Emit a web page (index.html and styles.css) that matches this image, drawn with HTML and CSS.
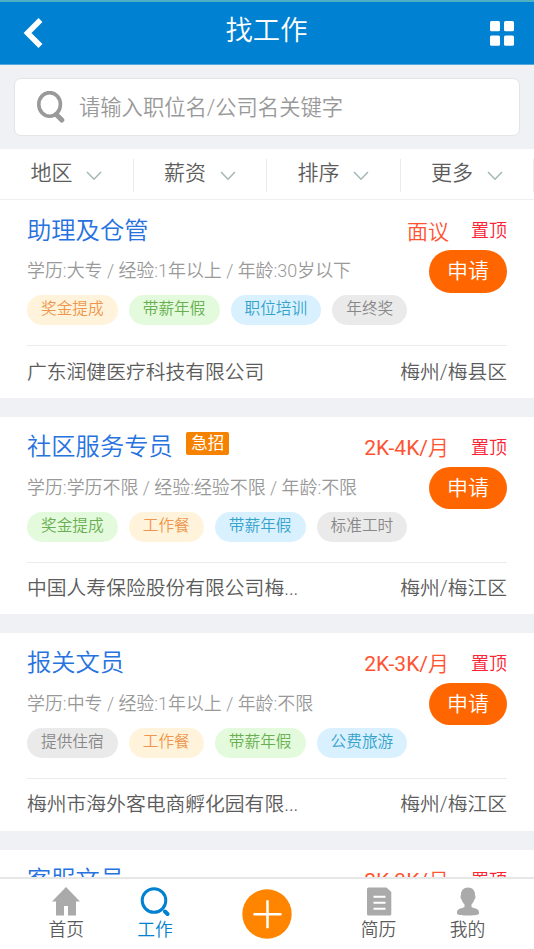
FILE: index.html
```html
<!DOCTYPE html>
<html lang="zh-CN">
<head>
<meta charset="utf-8">
<title>找工作</title>
<link rel="stylesheet" href="styles.css">
</head>
<body>
<div class="app">
  <header class="header">
    <svg class="back" viewBox="0 0 20 32"><path d="M17.500 3 4.500 16l13 13" fill="none" stroke="#fff" stroke-width="5.500"/></svg>
    <h1>找工作</h1>
    <svg class="grid-icon" viewBox="0 0 24 25" fill="#fff"><rect width="10" height="10.2" rx="1.5"/><rect x="14" width="10" height="10.2" rx="1.5"/><rect y="14.5" width="10" height="10.2" rx="1.5"/><rect x="14" y="14.5" width="10" height="10.2" rx="1.5"/></svg>
  </header>
  <div class="search">
    <div class="search-box">
      <svg viewBox="0 0 28 32" fill="none" stroke="#999"><ellipse cx="12.6" cy="13.4" rx="10.8" ry="11.8" stroke-width="3.6"/><path d="m19.300 23.500 5.500 5.500" stroke-width="5" stroke-linecap="round"/></svg>
      <span>请输入职位名/公司名关键字</span>
    </div>
  </div>
  <nav class="filters">
    <div class="filter">地区<svg viewBox="0 0 16 10"><path d="m1 1 7 7.2L15 1"/></svg></div>
    <div class="filter">薪资<svg viewBox="0 0 16 10"><path d="m1 1 7 7.2L15 1"/></svg></div>
    <div class="filter">排序<svg viewBox="0 0 16 10"><path d="m1 1 7 7.2L15 1"/></svg></div>
    <div class="filter">更多<svg viewBox="0 0 16 10"><path d="m1 1 7 7.2L15 1"/></svg></div>
  </nav>
  <main class="jobs">
    <article class="job first">
      <div class="job-main">
        <div class="info">
          <h2>助理及仓管</h2>
          <p>学历:大专 / 经验:1年以上 / 年龄:30岁以下</p>
          <div class="tags"><span class="tag yellow">奖金提成</span><span class="tag green">带薪年假</span><span class="tag blue">职位培训</span><span class="tag gray">年终奖</span></div>
        </div>
        <div class="side">
          <div class="pay"><span>面议</span><em>置顶</em></div>
          <button>申请</button>
        </div>
      </div>
      <div class="company"><span>广东润健医疗科技有限公司</span><span>梅州/梅县区</span></div>
    </article>
    <article class="job">
      <div class="job-main">
        <div class="info">
          <h2>社区服务专员<b>急招</b></h2>
          <p>学历:学历不限 / 经验:经验不限 / 年龄:不限</p>
          <div class="tags"><span class="tag green">奖金提成</span><span class="tag yellow">工作餐</span><span class="tag blue">带薪年假</span><span class="tag gray">标准工时</span></div>
        </div>
        <div class="side">
          <div class="pay"><span><strong>2K-4K/</strong>月</span><em>置顶</em></div>
          <button>申请</button>
        </div>
      </div>
      <div class="company"><span>中国人寿保险股份有限公司梅...</span><span>梅州/梅江区</span></div>
    </article>
    <article class="job">
      <div class="job-main">
        <div class="info">
          <h2>报关文员</h2>
          <p>学历:中专 / 经验:1年以上 / 年龄:不限</p>
          <div class="tags"><span class="tag gray">提供住宿</span><span class="tag yellow">工作餐</span><span class="tag green">带薪年假</span><span class="tag blue">公费旅游</span></div>
        </div>
        <div class="side">
          <div class="pay"><span><strong>2K-3K/</strong>月</span><em>置顶</em></div>
          <button>申请</button>
        </div>
      </div>
      <div class="company"><span>梅州市海外客电商孵化园有限...</span><span>梅州/梅江区</span></div>
    </article>
    <article class="job">
      <div class="job-main">
        <div class="info"><h2>客服文员</h2></div>
        <div class="side"><div class="pay"><span><strong>2K-3K/</strong>月</span><em>置顶</em></div></div>
      </div>
    </article>
  </main>
  <footer class="tabbar">
    <div class="tab">
      <svg viewBox="0 0 28 29" fill="#aaa"><path d="M14 0 28 14.5h-4V28.5h-8V19h-4v9.500H4V14.500H0z"/></svg>
      <span>首页</span>
    </div>
    <div class="tab active">
      <svg class="find" viewBox="0 0 30 30" fill="none" stroke="#0081d1"><circle cx="14" cy="13.500" r="11.800" stroke-width="3"/><path d="m25 24.500 2.500 2.500" stroke-width="4" stroke-linecap="round"/></svg>
      <span>工作</span>
    </div>
    <div class="add"><svg viewBox="0 0 50 50"><circle cx="25" cy="25" r="24.700" fill="#ff8400"/><path d="M11.500 25.300h28M25.500 11.300v28" stroke="#fff" stroke-width="2.500"/></svg></div>
    <div class="tab">
      <svg viewBox="0 0 28 29"><path d="M3.500.5h18L26.300 5v22a1.500 1.500 0 0 1-1.500 1.500H3.500A1.500 1.500 0 0 1 2 27V2A1.500 1.500 0 0 1 3.500.5z" fill="#aaa"/><path d="M8.500 9.700h12M8.500 15.700h12M8.500 21.700h12" stroke="#fff" stroke-width="2"/></svg>
      <span>简历</span>
    </div>
    <div class="tab">
      <svg viewBox="0 0 28 29" fill="#aaa"><path d="M14 .4c4.500 0 7 3 7 7 0 1 .5 1.600.5 2.600 0 1.300-.7 2-1.200 2.800-.6 2-1.700 3.500-2.800 4.700V20c2.500 1.600 7.500 1.300 7.500 5.500v1.500c-3 2-19 2-22 0v-1.500C3 21.300 8 21.600 10.500 20v-2.500c-1.100-1.200-2.200-2.700-2.800-4.700-.5-.8-1.200-1.500-1.200-2.800 0-1 .5-1.600.5-2.600 0-4 2.500-7 7-7z"/></svg>
      <span>我的</span>
    </div>
  </footer>
</div>
</body>
</html>
```
FILE: styles.css
```css
* { box-sizing: border-box; }
body {
  margin: 0;
  background: #f0f1f5;
  font-family: Roboto, "Noto Sans CJK SC", sans-serif;
  font-weight: 350;
  color: #5c5c5c;
}
h1, h2, p { margin: 0; font-weight: inherit; }
svg { display: block; flex: none; }
.app { height: 949px; display: flex; flex-direction: column; overflow: hidden; white-space: nowrap; }
.header {
  height: 65px;
  flex: none;
  display: flex;
  align-items: center;
  justify-content: space-between;
  padding: 0 20px 0 23px;
  background: #0081d1;
  border-top: 2px solid #4fb0c4;
  border-bottom: 1px solid #53a9dd;
  color: #fff;
}
.header h1 { font-size: 27.3px; line-height: 40px; margin-bottom: 4px; }
.back { width: 20px; height: 32px; }
.grid-icon { width: 24px; height: 25px; }
.search { flex: none; height: 84px; padding: 13px 14px 0 14px; }
.search-box {
  height: 58px;
  display: flex;
  align-items: center;
  gap: 14px;
  padding-left: 22px;
  background: #fff;
  border: 1px solid #e3e5e5;
  border-radius: 7px;
  color: #999;
  font-size: 21.3px;
}
.search-box span { margin-bottom: 3px; }
.search-box svg { width: 28px; height: 32px; }
.filters {
  flex: none;
  height: 51px;
  display: grid;
  grid-template-columns: repeat(4, 133.5px);
  align-items: center;
  background: #fff;
  border-bottom: 1px solid #f0f0f1;
}
.filter {
  height: 33px;
  margin-top: 3px;
  display: flex;
  gap: 13.500px;
  padding-left: 30.5px;
  line-height: 28px;
  font-size: 21px;
  border-right: 1px solid #eaeaec;
}
.filter svg { width: 16px; height: 10px; margin-top: 12px; fill: none; stroke: #a4b7b7; stroke-width: 1.5; }
.jobs { flex: 1; min-height: 0; overflow: hidden; display: flex; flex-direction: column; gap: 19px; }
.job { flex: none; height: 197.300px; padding: 0 27px; background: #fff; }
.job.first { height: 198px; }
.job-main { height: 145px; display: flex; justify-content: space-between; }
.info { width: 0; }
.info h2 { height: 58px; display: flex; align-items: flex-start; color: #2672df; font-size: 24.3px; line-height: 60px; }
.first .info h2 { line-height: 62px; }
.info h2 b {
  flex: none;
  height: 23px;
  width: 43px;
  margin: 15px 0 0 13.500px;
  border-radius: 2px;
  background: #f58200;
  color: #fff;
  font-weight: 400;
  font-size: 16.5px;
  line-height: 23.500px;
  text-align: center;
}
.info p { height: 25px; line-height: 25px; color: #999; font-size: 17.95px; }
.tags { display: flex; gap: 11px; margin-top: 12px; }
.tag { flex: none; height: 30px; padding: 0 14px; border-radius: 15px; font-size: 15.7px; line-height: 28.500px; }
.yellow { background: #fff4db; color: #ef964e; }
.green { background: #e3fbdc; color: #69ae51; }
.blue { background: #d9f1ff; color: #35a2ca; }
.gray { background: #eaeaea; color: #888; }
.side { display: flex; flex-direction: column; align-items: flex-end; }
.pay { height: 49.500px; padding-top: 15px; display: flex; gap: 22px; line-height: 33px; font-size: 21px; color: #ff5432; }
.first .pay { height: 50px; line-height: 34px; }
.pay strong { font-weight: 400; }
.pay em { font-style: normal; font-size: 18px; line-height: 31px; color: #fc2434; }
.side button {
  width: 78px;
  height: 42.500px;
  padding: 0;
  border: 0;
  border-radius: 22px;
  background: #ff6600;
  color: #fff;
  font: inherit;
  font-size: 21px;
  line-height: 42px;
}
.company {
  height: 52px;
  display: flex;
  justify-content: space-between;
  border-top: 1px solid #ebebeb;
  font-size: 19.8px;
  line-height: 52px;
}
.first .company { line-height: 53px; }
.tabbar {
  flex: none;
  height: 72px;
  display: grid;
  grid-template-columns: 22px 88.500px 89px 134.500px 89px 89px;
  background: #fff;
  border-top: 2px solid #e7e7e8;
}
.tab { display: flex; flex-direction: column; align-items: center; padding-top: 8px; font-size: 17.8px; }
.tab:first-child { grid-column: 2; }
.tab svg { width: 28px; height: 29px; }
.tab .find { width: 30px; height: 30px; margin-bottom: -1px; }
.tab span { line-height: 28px; }
.active { color: #0081d1; }
.add { display: flex; justify-content: center; padding-top: 10px; }
.add svg { width: 50px; height: 50px; }
```
